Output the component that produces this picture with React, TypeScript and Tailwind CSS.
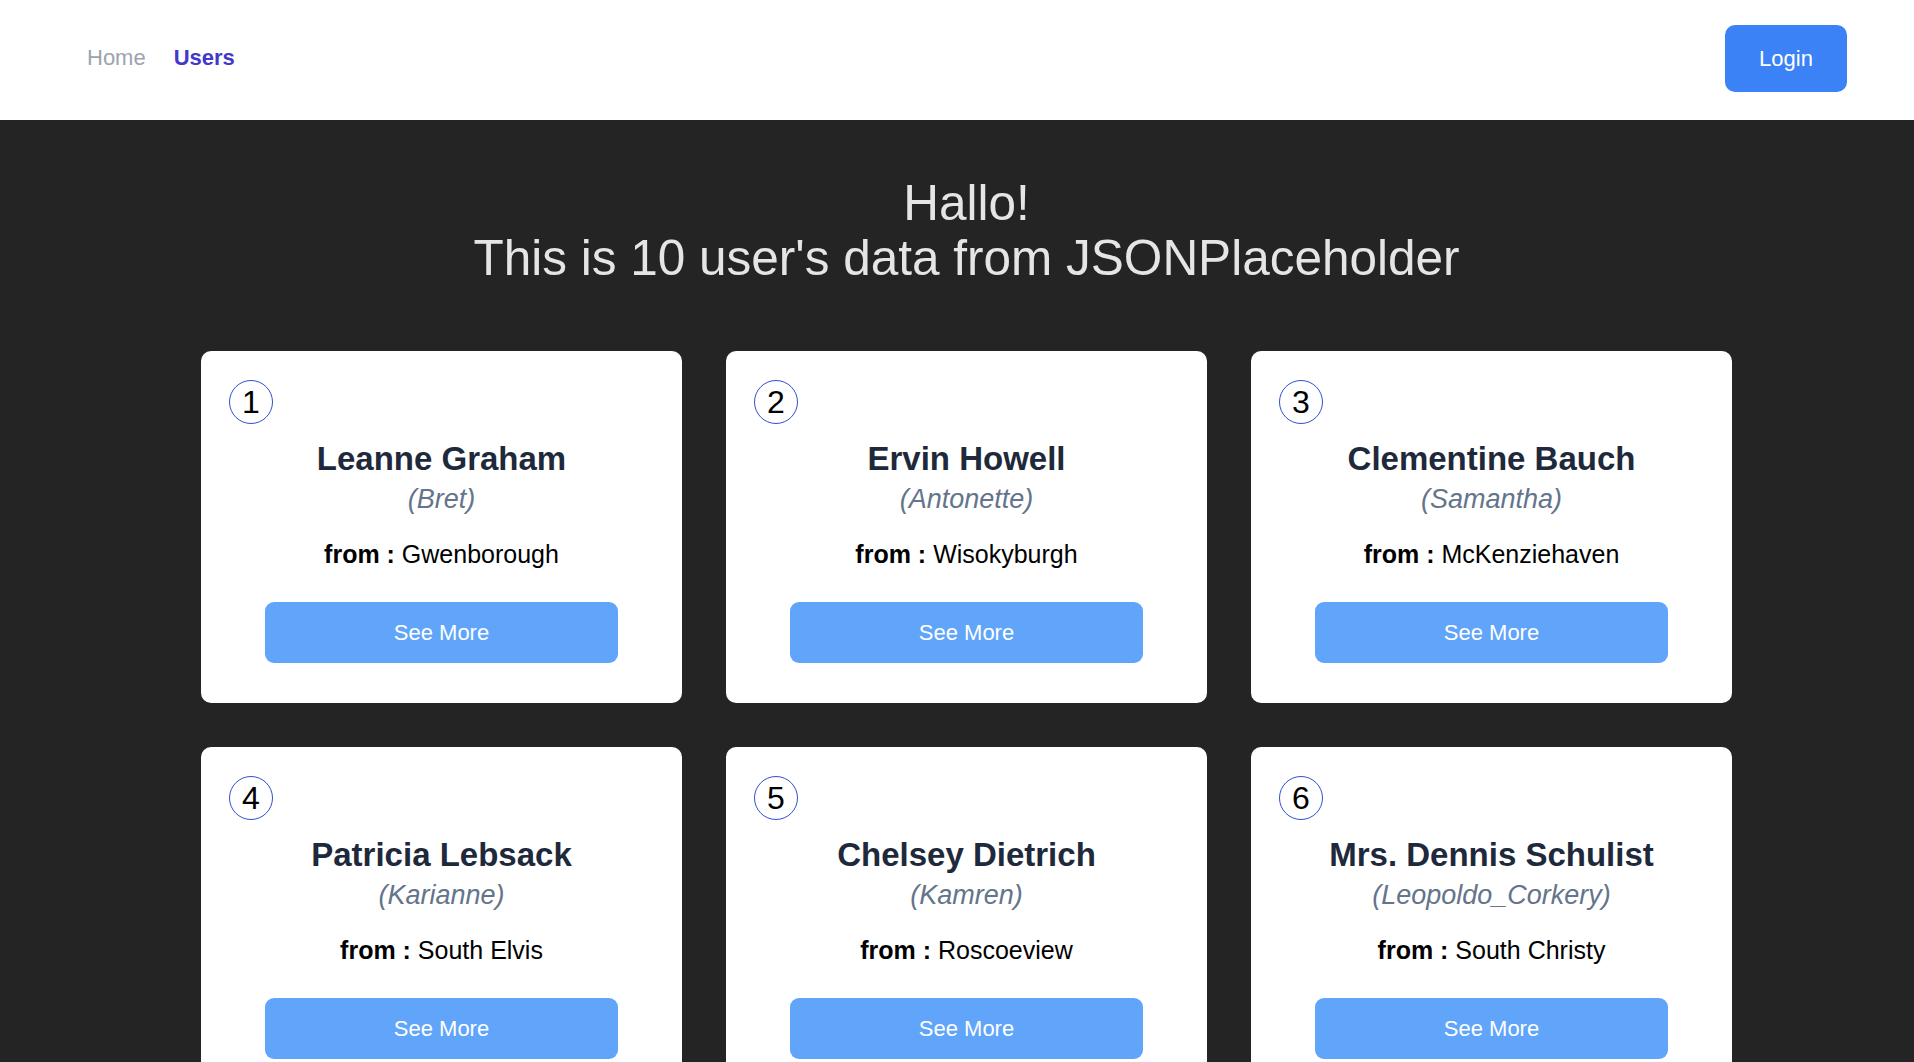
import React from "react";

const users = [
  { id: 1, name: "Leanne Graham", username: "Bret", city: "Gwenborough" },
  { id: 2, name: "Ervin Howell", username: "Antonette", city: "Wisokyburgh" },
  { id: 3, name: "Clementine Bauch", username: "Samantha", city: "McKenziehaven" },
  { id: 4, name: "Patricia Lebsack", username: "Karianne", city: "South Elvis" },
  { id: 5, name: "Chelsey Dietrich", username: "Kamren", city: "Roscoeview" },
  { id: 6, name: "Mrs. Dennis Schulist", username: "Leopoldo_Corkery", city: "South Christy" },
  { id: 7, name: "Kurtis Weissnat", username: "Elwyn.Skiles", city: "Howemouth" },
  { id: 8, name: "Nicholas Runolfsdottir V", username: "Maxime_Nienow", city: "Aliyaview" },
  { id: 9, name: "Glenna Reichert", username: "Delphine", city: "Bartholomebury" },
  { id: 10, name: "Clementina DuBuque", username: "Moriah.Stanton", city: "Lebsackbury" },
];

function Card({ u }: { u: (typeof users)[number] }) {
  return (
    <div className="bg-white rounded-[10px] pt-[29px] pb-[40px] flex flex-col">
      <div className="ml-[28px] w-[44px] h-[44px] rounded-full border border-[#2f4fd0] flex items-center justify-center text-[32px] leading-none text-black">
        {u.id}
      </div>
      <div className="mt-[13px] text-center text-[33px] leading-[44px] font-bold text-[#1e293b]">
        {u.name}
      </div>
      <div className="text-center text-[27px] leading-[37px] italic text-[#64748b]">
        ({u.username})
      </div>
      <div className="mt-[17px] text-center text-[25px] leading-[38px] text-black">
        <span className="font-bold">from :</span> {u.city}
      </div>
      <button className="mt-[29px] mx-[64px] h-[61px] rounded-[9px] bg-[#60a5fa] text-white text-[22px]">
        See More
      </button>
    </div>
  );
}

export default function App() {
  return (
    <div
      className="min-h-screen bg-[#242424]"
      style={{ fontFamily: '"Liberation Sans", Arial, sans-serif' }}
    >
      <header className="h-[120px] bg-white flex items-center justify-between pl-[87px] pr-[67px] pb-[3px]">
        <nav className="flex items-center gap-[28px] text-[22px] pb-[2px]">
          <a className="text-[#9ca3af]">Home</a>
          <a className="text-[#4338ca] font-bold">Users</a>
        </nav>
        <button className="w-[122px] h-[67px] rounded-[10px] bg-[#3b82f6] text-white text-[22px]">
          Login
        </button>
      </header>
      <main className="pl-[201px] w-[1732px] pb-[60px]">
        <h1 className="pt-[56px] text-center text-[49.5px] leading-[54.6px] text-[#e5e5e5]">
          Hallo!
          <br />
          This is 10 user's data from JSONPlaceholder
        </h1>
        <div className="mt-[66px] grid grid-cols-3 gap-x-[44px] gap-y-[44px]">
          {users.map((u) => (
            <Card key={u.id} u={u} />
          ))}
        </div>
      </main>
    </div>
  );
}
